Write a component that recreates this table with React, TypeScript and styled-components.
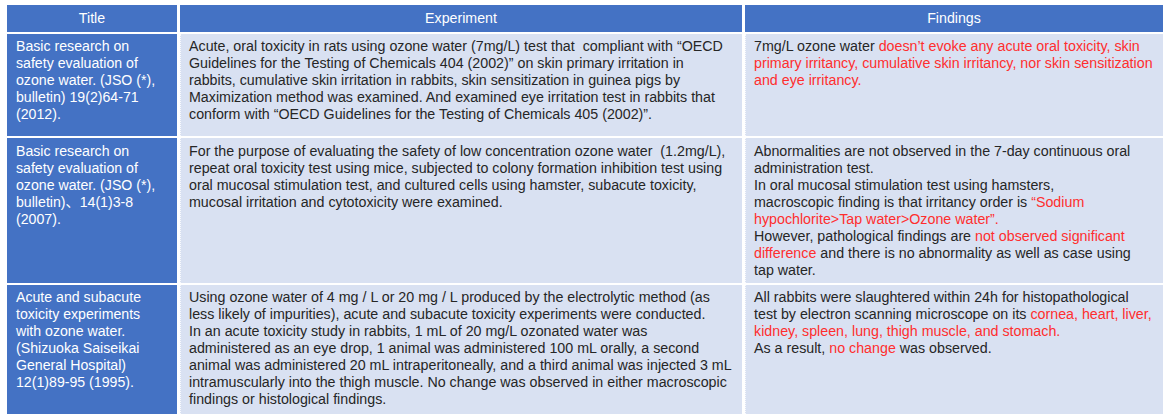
import React from "react";
import styled, { createGlobalStyle } from "styled-components";

const GlobalStyle = createGlobalStyle`
  html, body {
    margin: 0;
    padding: 0;
    background: #ffffff;
  }
  body {
    font-family: "Liberation Sans", Arial, "Noto Sans CJK JP", sans-serif;
  }
`;

const Page = styled.div`
  padding: 5px 7px 0 7px;
`;

const Table = styled.div`
  display: grid;
  grid-template-columns: 170px 562px 418px;
  grid-template-rows: 27px 102px 145px 129px;
  column-gap: 3px;
  row-gap: 2px;
  width: 1156px;
`;

const HeaderCell = styled.div`
  background: #4472c4;
  color: #ffffff;
  font-size: 14.2px;
  display: flex;
  align-items: center;
  justify-content: center;
  padding-bottom: 1px;
`;

const Cell = styled.div<{ $pad?: number }>`
  font-size: 14.25px;
  line-height: 17px;
  white-space: nowrap;
  padding: ${p => p.$pad ?? 4}px 8px 0 8px;
  overflow: hidden;
`;

const TitleCell = styled(Cell)`
  background: #4472c4;
  color: #ffffff;
  padding-left: 9px;
  font-size: 14.15px;
`;

const BodyCell = styled(Cell)`
  background: #d9e1f2;
  color: #262626;
  border-left: 1px dotted rgba(255, 255, 255, 0.8);
`;

const Red = styled.span`
  color: #ff2e2e;
`;

type Seg = string | { red: string };
type Line = Seg[];

interface Row {
  pad: number;
  title: string[];
  experiment: string[];
  findings: Line[];
}

const rows: Row[] = [
  {
    pad: 4,
    title: [
      "Basic research on",
      "safety evaluation of",
      "ozone water. (JSO (*),",
      "bulletin) 19(2)64-71",
      "(2012).",
    ],
    experiment: [
      "Acute, oral toxicity in rats using ozone water (7mg/L) test that \u00a0compliant with “OECD",
      "Guidelines for the Testing of Chemicals 404 (2002)” on skin primary irritation in",
      "rabbits, cumulative skin irritation in rabbits, skin sensitization in guinea pigs by",
      "Maximization method was examined. And examined eye irritation test in rabbits that",
      "conform with “OECD Guidelines for the Testing of Chemicals 405 (2002)”.",
    ],
    findings: [
      ["7mg/L ozone water ", { red: "doesn’t evoke any acute oral toxicity, skin" }],
      [{ red: "primary irritancy, cumulative skin irritancy, nor skin sensitization" }],
      [{ red: "and eye irritancy." }],
    ],
  },
  {
    pad: 5,
    title: [
      "Basic research on",
      "safety evaluation of",
      "ozone water. (JSO (*),",
      "bulletin)、14(1)3-8",
      "(2007).",
    ],
    experiment: [
      "For the purpose of evaluating the safety of low concentration ozone water \u00a0(1.2mg/L),",
      "repeat oral toxicity test using mice, subjected to colony formation inhibition test using",
      "oral mucosal stimulation test, and cultured cells using hamster, subacute toxicity,",
      "mucosal irritation and cytotoxicity were examined.",
    ],
    findings: [
      ["Abnormalities are not observed in the 7-day continuous oral"],
      ["administration test."],
      ["In oral mucosal stimulation test using hamsters,"],
      ["macroscopic finding is that irritancy order is ", { red: "“Sodium" }],
      [{ red: "hypochlorite>Tap water>Ozone water”." }],
      ["However, pathological findings are ", { red: "not observed significant" }],
      [{ red: "difference" }, " and there is no abnormality as well as case using"],
      ["tap water."],
    ],
  },
  {
    pad: 4,
    title: [
      "Acute and subacute",
      "toxicity experiments",
      "with ozone water.",
      "(Shizuoka Saiseikai",
      "General Hospital)",
      "12(1)89-95 (1995).",
    ],
    experiment: [
      "Using ozone water of 4 mg / L or 20 mg / L produced by the electrolytic method (as",
      "less likely of impurities), acute and subacute toxicity experiments were conducted.",
      "In an acute toxicity study in rabbits, 1 mL of 20 mg/L ozonated water was",
      "administered as an eye drop, 1 animal was administered 100 mL orally, a second",
      "animal was administered 20 mL intraperitoneally, and a third animal was injected 3 mL",
      "intramuscularly into the thigh muscle. No change was observed in either macroscopic",
      "findings or histological findings.",
    ],
    findings: [
      ["All rabbits were slaughtered within 24h for histopathological"],
      ["test by electron scanning microscope on its ", { red: "cornea, heart, liver," }],
      [{ red: "kidney, spleen, lung, thigh muscle, and stomach." }],
      ["As a result, ", { red: "no change" }, " was observed."],
    ],
  },
];

const Lines: React.FC<{ lines: string[] }> = ({ lines }) => (
  <>
    {lines.map((l, i) => (
      <React.Fragment key={i}>
        {i > 0 && <br />}
        {l}
      </React.Fragment>
    ))}
  </>
);

const RichLines: React.FC<{ lines: Line[] }> = ({ lines }) => (
  <>
    {lines.map((line, i) => (
      <React.Fragment key={i}>
        {i > 0 && <br />}
        {line.map((seg, j) =>
          typeof seg === "string" ? (
            <React.Fragment key={j}>{seg}</React.Fragment>
          ) : (
            <Red key={j}>{seg.red}</Red>
          )
        )}
      </React.Fragment>
    ))}
  </>
);

export default function App() {
  return (
    <>
      <GlobalStyle />
      <Page>
        <Table>
          <HeaderCell>Title</HeaderCell>
          <HeaderCell>Experiment</HeaderCell>
          <HeaderCell>Findings</HeaderCell>
          {rows.map((row, i) => (
            <React.Fragment key={i}>
              <TitleCell $pad={row.pad}>
                <Lines lines={row.title} />
              </TitleCell>
              <BodyCell $pad={row.pad}>
                <Lines lines={row.experiment} />
              </BodyCell>
              <BodyCell $pad={row.pad}>
                <RichLines lines={row.findings} />
              </BodyCell>
            </React.Fragment>
          ))}
        </Table>
      </Page>
    </>
  );
}
